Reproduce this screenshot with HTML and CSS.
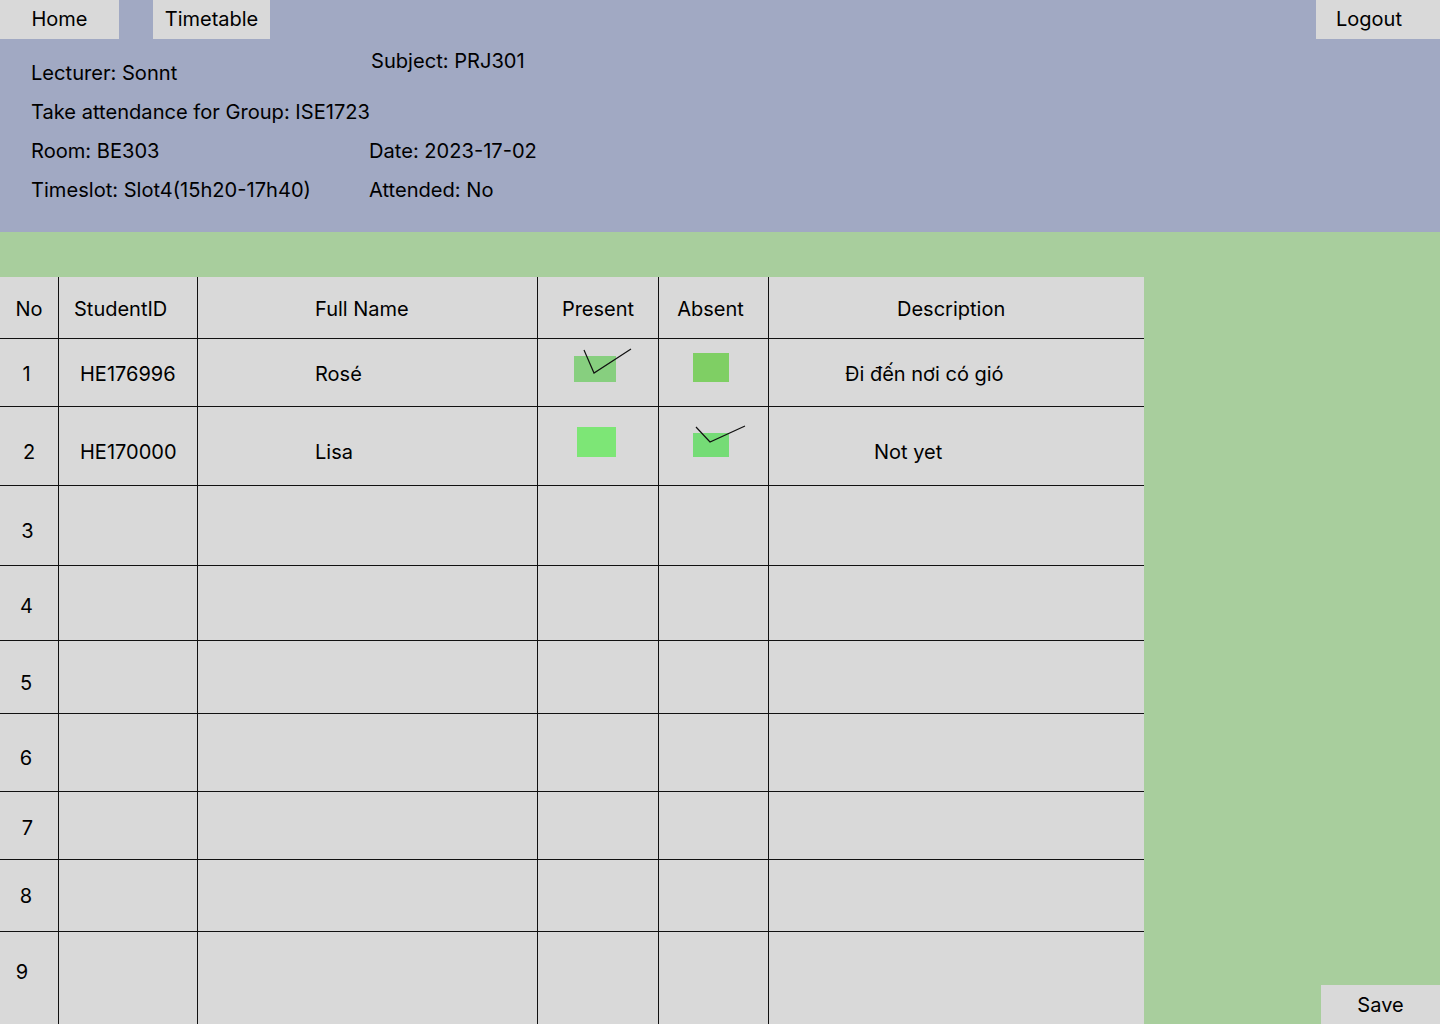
FILE: index.html
```html
<!DOCTYPE html>
<html lang="vi">
<head>
<meta charset="utf-8">
<title>Take attendance</title>
<link rel="stylesheet" href="styles.css">
</head>
<body>
<header class="top">
  <nav class="nav">
    <a class="btn btn-home">Home</a>
    <a class="btn btn-tt">Timetable</a>
    <a class="btn btn-logout">Logout</a>
  </nav>
  <div class="info">
    <div class="lecturer">Lecturer: Sonnt</div>
    <div class="subject">Subject: PRJ301</div>
    <div class="group">Take attendance for Group: ISE1723</div>
    <div>Room: BE303</div>
    <div>Date: 2023-17-02</div>
    <div>Timeslot: Slot4(15h20-17h40)</div>
    <div>Attended: No</div>
  </div>
</header>
<main class="main">
  <div class="table">
    <div class="row hd">
      <div class="cell c-no">No</div>
      <div class="cell c-id">StudentID</div>
      <div class="cell c-name">Full Name</div>
      <div class="cell c-pr">Present</div>
      <div class="cell c-ab">Absent</div>
      <div class="cell c-desc d-hd">Description</div>
    </div>
    <div class="row r1">
      <div class="cell c-no">1</div>
      <div class="cell c-id">HE176996</div>
      <div class="cell c-name">Rosé</div>
      <div class="cell chk"><svg width="120" height="67" viewBox="0 0 120 67"><rect x="36" y="17" width="42" height="26" fill="#87cf7f"/><polyline points="46,11 56,34 93,10" fill="none" stroke="#111" stroke-width="1.2"/></svg></div>
      <div class="cell chk"><svg width="109" height="67" viewBox="0 0 109 67"><rect x="34" y="14" width="36" height="29" fill="#7fcf64"/></svg></div>
      <div class="cell c-desc d-1">Đi đến nơi có gió</div>
    </div>
    <div class="row r2">
      <div class="cell c-no">2</div>
      <div class="cell c-id">HE170000</div>
      <div class="cell c-name">Lisa</div>
      <div class="cell chk"><svg width="120" height="78" viewBox="0 0 120 78"><rect x="39" y="20" width="39" height="30" fill="#7de676"/></svg></div>
      <div class="cell chk"><svg width="109" height="78" viewBox="0 0 109 78"><rect x="34" y="26" width="36" height="24" fill="#75dc76"/><polyline points="37,20 51,35 86,19" fill="none" stroke="#111" stroke-width="1.2"/></svg></div>
      <div class="cell c-desc d-2">Not yet</div>
    </div>
    <div class="row r3">
      <div class="cell c-no">3</div><div class="cell"></div><div class="cell"></div><div class="cell"></div><div class="cell"></div><div class="cell c-desc"></div>
    </div>
    <div class="row r4">
      <div class="cell c-no">4</div><div class="cell"></div><div class="cell"></div><div class="cell"></div><div class="cell"></div><div class="cell c-desc"></div>
    </div>
    <div class="row r5">
      <div class="cell c-no">5</div><div class="cell"></div><div class="cell"></div><div class="cell"></div><div class="cell"></div><div class="cell c-desc"></div>
    </div>
    <div class="row r6">
      <div class="cell c-no">6</div><div class="cell"></div><div class="cell"></div><div class="cell"></div><div class="cell"></div><div class="cell c-desc"></div>
    </div>
    <div class="row r7">
      <div class="cell c-no">7</div><div class="cell"></div><div class="cell"></div><div class="cell"></div><div class="cell"></div><div class="cell c-desc"></div>
    </div>
    <div class="row r8">
      <div class="cell c-no">8</div><div class="cell"></div><div class="cell"></div><div class="cell"></div><div class="cell"></div><div class="cell c-desc"></div>
    </div>
    <div class="row r9 last">
      <div class="cell c-no">9</div><div class="cell"></div><div class="cell"></div><div class="cell"></div><div class="cell"></div><div class="cell c-desc"></div>
    </div>
  </div>
  <div class="side">
    <button class="save">Save</button>
  </div>
</main>
</body>
</html>
```

FILE: styles.css
```css
* { box-sizing: border-box; }

html, body {
  margin: 0;
  padding: 0;
}

body {
  width: 1440px;
  height: 1024px;
  overflow: hidden;
  font-family: Inter, "Noto Sans", "Liberation Sans", sans-serif;
  font-size: 20px;
  color: #000;
  background: #a8ce9d;
}

/* ---------- header ---------- */
.top {
  height: 232px;
  background: #a1a9c3;
}

.nav {
  display: flex;
  height: 39px;
}

.btn {
  display: block;
  height: 39px;
  line-height: 39px;
  background: #d9d9d9;
  color: #000;
  text-decoration: none;
  font-size: 20px;
}

.btn-home { width: 119px; text-align: center; }
.btn-tt { width: 117px; margin-left: 34px; text-align: center; }
.btn-logout { width: 124px; margin-left: auto; padding-left: 20px; }

.info {
  display: grid;
  grid-template-columns: 338px 1fr;
  row-gap: 15px;
  margin-top: 10px;
  padding-left: 31px;
  font-size: 20.1px;
  line-height: 24px;
}

.info > div { white-space: nowrap; }

.lecturer { margin-top: 12px; }
.subject { padding-left: 2px; }
.group { grid-column: 1 / -1; }

/* ---------- main ---------- */
.main {
  display: flex;
  height: 792px;
}

.table {
  flex: none;
  width: 1144px;
  height: 747px;
  margin-top: 45px;
  background: #d9d9d9;
  display: grid;
  grid-template-columns: 59px 139px 340px 121px 110px 375px;
  grid-template-rows: 62px 68px 79px 80px 75px 73px 78px 68px 72px 92px;
  font-size: 20px;
}

.row { display: contents; }

.cell {
  display: flex;
  align-items: center;
  border-right: 1px solid #111;
  border-bottom: 1px solid #111;
  white-space: nowrap;
}

.cell.c-desc { border-right: none; }
.row.last > .cell { border-bottom: none; }

.c-no { justify-content: center; }
.c-id { padding-left: 21px; }
.c-name { padding-left: 117px; }
.c-pr, .c-ab { justify-content: center; }
.hd > .c-id { padding-left: 15px; }
.hd > .c-ab { padding-right: 6px; }
.d-hd { padding-left: 128px; }
.d-1 { padding-left: 76px; }
.d-2 { padding-left: 105px; }

.chk { padding: 0; align-items: flex-start; }
.chk svg { display: block; }

.hd > .cell { padding-top: 2px; }
.r1 > .cell:not(.chk) { padding-top: 3px; }
.r1 > .c-no { padding-right: 5px; }
.r2 > .cell:not(.chk) { padding-top: 11px; }
.r2 > .c-name { padding-top: 4px; }
.r3 > .cell { padding-top: 10px; }
.r3 > .c-no { padding-right: 3px; }
.r4 > .cell { padding-top: 5px; padding-right: 5px; }
.r5 > .cell { padding-top: 11px; }
.r5 > .c-no, .r6 > .c-no, .r8 > .c-no { padding-right: 6px; }
.r6 > .cell { padding-top: 10px; }
.r7 > .cell { padding-top: 4px; }
.r7 > .c-no { padding-right: 3px; }
.r9 > .cell { padding-bottom: 12px; }
.r9 > .c-no { padding-right: 14px; }

/* ---------- side / save ---------- */
.side {
  flex: 1;
  display: flex;
  align-items: flex-end;
  justify-content: flex-end;
}

.save {
  width: 119px;
  height: 39px;
  border: none;
  margin: 0;
  padding: 0;
  background: #d9d9d9;
  color: #000;
  font-family: Inter, "Noto Sans", "Liberation Sans", sans-serif;
  font-size: 20px;
}
```
